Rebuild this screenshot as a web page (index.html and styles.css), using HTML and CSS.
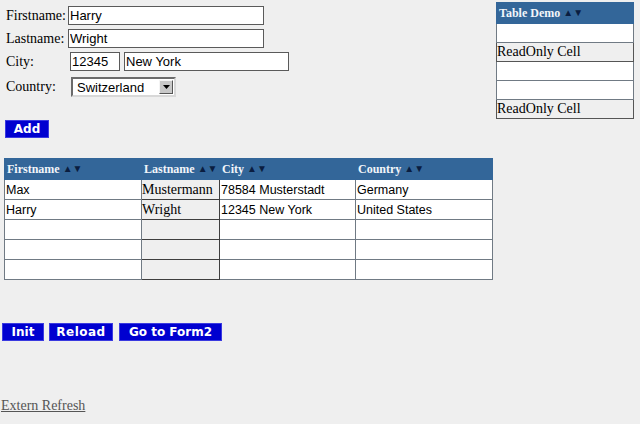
FILE: index.html
```html
<!DOCTYPE html>
<html>
<head>
<meta charset="utf-8">
<link rel="stylesheet" href="styles.css">
</head>
<body>
<div class="top">
  <div class="left">
    <div class="form">
      <label class="lbl">Firstname:</label>
      <div class="field"><input class="inp w-name" value="Harry"></div>
      <label class="lbl">Lastname:</label>
      <div class="field"><input class="inp w-name" value="Wright"></div>
      <label class="lbl">City:</label>
      <div class="field city"><input class="inp w-zip" value="12345"><input class="inp w-city" value="New York"></div>
      <label class="lbl">Country:</label>
      <div class="field country">
        <div class="select"><span class="sel-text">Switzerland</span><span class="sel-btn"><svg width="7" height="4" viewBox="0 0 7 4"><path d="M0 0h7L3.5 4z" fill="#000"/></svg></span></div>
      </div>
    </div>
    <button class="btn add">Add</button>
  </div>
  <table class="grid demo">
    <tr><th>Table Demo <span class="ar">▲▼</span></th></tr>
    <tr><td></td></tr>
    <tr><td class="ro">ReadOnly Cell</td></tr>
    <tr><td></td></tr>
    <tr><td></td></tr>
    <tr><td class="ro">ReadOnly Cell</td></tr>
  </table>
</div>

<table class="grid main">
  <colgroup><col class="c1"><col class="c2"><col class="c3"><col class="c4"></colgroup>
  <tr><th>Firstname <span class="ar">▲▼</span></th><th>Lastname <span class="ar">▲▼</span></th><th>City <span class="ar">▲▼</span></th><th>Country <span class="ar">▲▼</span></th></tr>
  <tr><td>Max</td><td class="ro">Mustermann</td><td>78584 Musterstadt</td><td>Germany</td></tr>
  <tr><td>Harry</td><td class="ro">Wright</td><td>12345 New York</td><td>United States</td></tr>
  <tr><td></td><td class="ro"></td><td></td><td></td></tr>
  <tr><td></td><td class="ro"></td><td></td><td></td></tr>
  <tr><td></td><td class="ro"></td><td></td><td></td></tr>
</table>

<div class="actions">
  <button class="btn b-init">Init</button>
  <button class="btn b-reload">Reload</button>
  <button class="btn b-form">Go to Form2</button>
</div>

<a class="link" href="#">Extern Refresh</a>
</body>
</html>
```
FILE: styles.css
```css
html, body {
  margin: 0;
  padding: 0;
  background: #efefef;
  font-family: "Liberation Serif", "Times New Roman", serif;
  font-size: 14px;
  color: #000;
}
.top {
  display: flex;
  align-items: flex-start;
}
.left {
  width: 496px;
  padding-top: 6px;
}
.form {
  display: grid;
  grid-template-columns: 62px auto;
  row-gap: 4px;
  padding-left: 6px;
  align-items: center;
}
.lbl {
  line-height: 19px;
}
.field {
  display: flex;
  height: 19px;
}
.city { padding-left: 2px; gap: 4px; }
.country { padding-left: 3px; height: 20px; margin-top: 2px; }
.inp {
  box-sizing: border-box;
  height: 19px;
  margin: 0;
  border: 1px solid #5a5a5a;
  background: #fff;
  font-family: "Liberation Sans", Arial, sans-serif;
  font-size: 13px;
  padding: 0 1px;
  color: #000;
}
.w-name { width: 196px; }
.w-zip { width: 50px; }
.w-city { width: 165px; }
.select {
  box-sizing: border-box;
  width: 105px;
  height: 20px;
  border: 2px solid;
  border-color: #6b6b6b #d8d8d8 #d8d8d8 #6b6b6b;
  background: #fff;
  display: flex;
  align-items: center;
  justify-content: space-between;
  font-family: "Liberation Sans", Arial, sans-serif;
  font-size: 13px;
}
.sel-text { padding-left: 4px; }
.sel-btn {
  box-sizing: border-box;
  width: 14px;
  height: 14px;
  margin-right: 1px;
  background: #c8c8c8;
  border: 1px solid;
  border-color: #f4f4f4 #555 #555 #f4f4f4;
  display: flex;
  align-items: center;
  justify-content: center;
}
.btn {
  box-sizing: border-box;
  height: 18px;
  padding: 0;
  margin: 0;
  background: #0000d0;
  border: 1px solid #3a3ae0;
  color: #fff;
  font-family: "DejaVu Sans", Verdana, sans-serif;
  font-weight: bold;
  font-size: 12px;
  line-height: 15px;
  text-align: center;
}
.add {
  display: block;
  margin: 23px 0 0 5px;
  width: 44px;
}
.b-init { width: 42px; }
.b-reload { width: 64px; letter-spacing: 0.5px; }
.b-form { width: 103px; }
.grid {
  border-collapse: collapse;
  background: #fff;
}
.grid th {
  background: #336699;
  color: #f2f5fa;
  font-family: "Liberation Serif", "Times New Roman", serif;
  font-weight: bold;
  font-size: 12px;
  text-align: left;
  height: 20px;
  padding: 0 2px;
  border: 1px solid #336699;
  white-space: nowrap;
}
.ar {
  color: #0a1d40;
  font-size: 10px;
  letter-spacing: 0;
  vertical-align: 1px;
}
.grid td {
  border: 1px solid #707a84;
  height: 19px;
  padding: 0 1px;
  font-family: "Liberation Sans", Arial, sans-serif;
  font-size: 12.5px;
  white-space: nowrap;
}
.grid td.ro {
  background: #efefef;
  border: 1px solid #3e3e3e;
  font-family: "Liberation Serif", "Times New Roman", serif;
  font-size: 14px;
  padding: 0;
}
.demo {
  margin-top: 2px;
  width: 138px;
}
.demo td { height: 18px; }
.demo td.ro { border-color: #555; }
.main {
  margin: 20px 0 0 4px;
  table-layout: fixed;
  width: 488px;
}
.c1 { width: 137px; }
.c2 { width: 78px; }
.c3 { width: 136px; }
.c4 { width: 137px; }
.actions {
  display: flex;
  gap: 5px;
  margin: 43px 0 0 2px;
}
.actions .b-form { margin-left: 1px; }
.link {
  display: inline-block;
  margin: 57px 0 0 1px;
  color: #555;
  font-size: 14px;
  text-decoration: underline;
}
```
